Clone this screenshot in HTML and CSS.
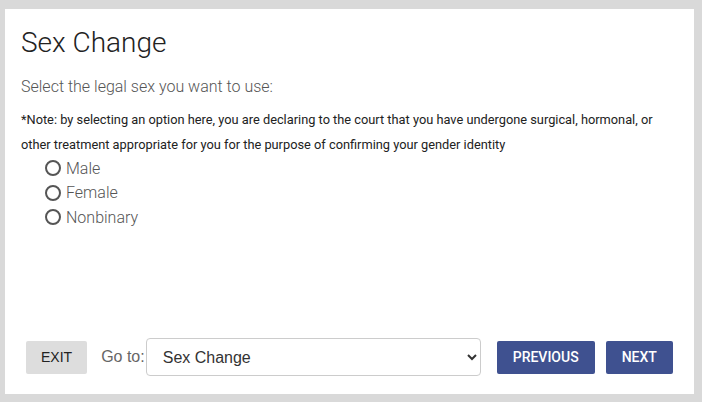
FILE: index.html
```html
<!DOCTYPE html>
<html>
<head>
<meta charset="utf-8">
<link rel="stylesheet" href="styles.css">
</head>
<body>
<div class="panel">
  <h1 class="title">Sex Change</h1>
  <p class="question">Select the legal sex you want to use:</p>
  <p class="note">*Note: by selecting an option here, you are declaring to the court that you have undergone surgical, hormonal, or other treatment appropriate for you for the purpose of confirming your gender identity</p>
  <div class="options">
    <label class="option"><input type="radio" name="sex" class="radio"><span>Male</span></label>
    <label class="option"><input type="radio" name="sex" class="radio"><span>Female</span></label>
    <label class="option"><input type="radio" name="sex" class="radio"><span>Nonbinary</span></label>
  </div>
  <div class="nav">
    <button class="btn btn-exit">EXIT</button>
    <span class="goto">Go to:</span>
    <select class="select"><option>Sex Change</option></select>
    <button class="btn btn-primary btn-prev">PREVIOUS</button>
    <button class="btn btn-primary">NEXT</button>
  </div>
</div>
</body>
</html>
```
FILE: styles.css
```css
html, body { margin: 0; padding: 0; }
body {
  background: #d9d9d9;
  width: 702px;
  height: 402px;
  padding: 9px 8px 8px 5px;
  box-sizing: border-box;
  font-family: Roboto, "Liberation Sans", sans-serif;
}
.panel {
  background: #fff;
  width: 689px;
  height: 385px;
  box-sizing: border-box;
  padding: 17px 16px 18px 16px;
  display: flex;
  flex-direction: column;
}
.title {
  margin: 0;
  font-weight: 300;
  font-size: 28px;
  line-height: 34px;
  color: #222;
}
.question {
  margin: 16px 0 0 0;
  font-weight: 300;
  font-size: 16px;
  line-height: 22px;
  color: #555;
}
.note {
  margin: 9px 0 0 0;
  font-size: 12.8px;
  line-height: 25px;
  color: #222;
}
.options {
  display: flex;
  flex-direction: column;
  padding-left: 24px;
  margin-top: -1px;
}
.option {
  display: flex;
  align-items: center;
  height: 24.5px;
  font-weight: 300;
  font-size: 16px;
  color: #555;
}
.radio {
  appearance: none;
  -webkit-appearance: none;
  width: 16px;
  height: 16px;
  margin: 0 5px 0 0;
  border: 2px solid #555;
  border-radius: 50%;
  box-sizing: border-box;
}
.nav {
  margin-top: auto;
  display: flex;
  align-items: center;
  padding-left: 5px;
}
.btn {
  border: none;
  border-radius: 2px;
  height: 33px;
  padding: 0 16px;
  font-size: 14px;
}
.btn-exit {
  background: #dddddd;
  color: #222;
  padding: 0 15px;
  font-family: "Liberation Sans", Arial, sans-serif;
}
.goto {
  margin-left: 14px;
  font-family: "Liberation Sans", Arial, sans-serif;
  font-size: 16px;
  color: #666;
}
.select {
  margin-left: 1px;
  width: 335px;
  height: 38px;
  border: 1px solid #ccc;
  border-radius: 4px;
  background: #fff;
  padding: 0 10px 0 12px;
  font-family: "Liberation Sans", Arial, sans-serif;
  font-size: 16px;
  color: #333;
}
.btn-primary {
  background: #3f5190;
  color: #fff;
  font-family: Roboto, sans-serif;
  font-weight: 500;
}
.btn-prev {
  margin-left: 16px;
  margin-right: 11px;
}
```
